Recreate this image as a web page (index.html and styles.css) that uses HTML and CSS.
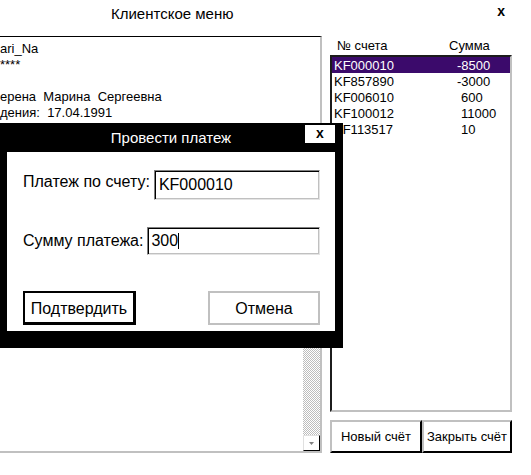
FILE: index.html
```html
<!DOCTYPE html>
<html lang="ru">
<head>
<meta charset="utf-8">
<title>Клиентское меню</title>
<link rel="stylesheet" href="styles.css">
</head>
<body>
<div class="app">
  <header class="topbar">
    <div class="title">Клиентское меню</div>
    <div class="win-close">x</div>
  </header>
  <div class="main">
    <section class="info-panel">
      <div class="info">ari_Na
****

ерена  Марина  Сергеевна
дения:  17.04.1991</div>
      <div class="vscroll">
        <div class="thumb"></div>
        <div class="track"></div>
        <div class="arrow"><svg width="5" height="3" viewBox="0 0 5 3"><polygon points="0,0 5,0 2.5,3" fill="#808080"/></svg></div>
      </div>
    </section>
    <section class="accounts">
      <div class="acc-head"><span class="c1">№ счета</span><span class="c2">Сумма</span></div>
      <div class="acc-list">
        <div class="row sel"><span class="acc">KF000010</span><span class="sum neg">-8500</span></div>
        <div class="row"><span class="acc">KF857890</span><span class="sum neg">-3000</span></div>
        <div class="row"><span class="acc">KF006010</span><span class="sum">600</span></div>
        <div class="row"><span class="acc">KF100012</span><span class="sum">11000</span></div>
        <div class="row"><span class="acc">KF113517</span><span class="sum">10</span></div>
      </div>
      <div class="acc-actions">
        <button class="btn btn-new">Новый счёт</button>
        <button class="btn btn-close">Закрыть счёт</button>
      </div>
    </section>
  </div>
  <div class="dialog">
    <div class="dlg-bar">
      <div class="dlg-title">Провести платеж</div>
      <div class="dlg-x">x</div>
    </div>
    <div class="dlg-body">
      <div class="field f1">
        <label>Платеж по счету:</label>
        <div class="input">KF000010</div>
      </div>
      <div class="field f2">
        <label>Сумму платежа:</label>
        <div class="input">300<span class="caret"></span></div>
      </div>
      <div class="dlg-actions">
        <button class="dbtn btn-ok">Подтвердить</button>
        <button class="dbtn btn-cancel">Отмена</button>
      </div>
    </div>
  </div>
</div>
</body>
</html>
```
FILE: styles.css
```css
* { box-sizing: border-box; }
body {
  margin: 0;
  background: #fff;
  font-family: "Liberation Sans", Arial, sans-serif;
  font-size: 13px;
  color: #000;
}
.app {
  position: relative;
  width: 531px;
  height: 475px;
  overflow: hidden;
}
.topbar {
  height: 36px;
  display: flex;
  align-items: flex-start;
}
.title {
  padding: 4.5px 0 0 111px;
  font-size: 15px;
  line-height: 18px;
}
.win-close {
  margin-left: auto;
  margin-right: 26px;
  padding-top: 2px;
  font-weight: bold;
  font-size: 14px;
  line-height: 18px;
}
.main {
  display: flex;
  gap: 8px;
  height: 417px;
}
.info-panel {
  width: 322px;
  display: flex;
  border-top: 1px solid #000;
  border-right: 2px solid #c0c0c0;
  border-bottom: 2px solid #c0c0c0;
}
.info {
  flex: 1;
  padding-top: 4px;
  line-height: 16px;
  white-space: pre;
  overflow: hidden;
}
.vscroll {
  width: 17px;
  display: flex;
  flex-direction: column;
}
.thumb {
  height: 311px;
  background: #fff;
}
.track {
  flex: 1;
  background: repeating-conic-gradient(#bdbdbd 0 25%, #fff 0 50%) 0 0 / 2px 2px;
}
.arrow {
  height: 16px;
  border: 1px solid;
  border-color: #e0e0e0 #000 #000 #e0e0e0;
  background: #fff;
  display: flex;
  align-items: center;
  justify-content: center;
}
.accounts {
  width: 182px;
  display: flex;
  flex-direction: column;
}
.acc-head {
  height: 19px;
  padding: 2px 0 0 7px;
  display: flex;
  line-height: 16px;
}
.acc-head .c1 { width: 112px; }
.acc-list {
  flex: 1;
  border: 2px solid;
  border-color: #1c1c1c #c0c0c0 #c0c0c0 #1c1c1c;
}
.row {
  display: flex;
  height: 16px;
  line-height: 18px;
  padding-left: 2px;
}
.row .acc { width: 127px; }
.row .neg { margin-left: -4px; }
.row.sel {
  background: #3b0a6b;
  color: #fff;
}
.acc-actions {
  display: flex;
  margin-top: 8px;
  height: 33px;
}
.btn {
  font: inherit;
  color: #000;
  background: #fff;
  border: 2px solid;
  border-color: #c0c0c0 #000 #000 #c0c0c0;
  padding: 0;
}
.btn-new { width: 92px; }
.btn-close { width: 90px; }

.dialog {
  position: absolute;
  left: 0;
  top: 123px;
  width: 343px;
  background: #000;
  padding: 0 8px 17px 7px;
}
.dlg-bar {
  display: grid;
  grid-template-columns: 30px 1fr 30px;
  height: 29px;
}
.dlg-title {
  grid-column: 2;
  text-align: center;
  color: #fff;
  font-size: 15px;
  line-height: 28px;
  padding-top: 1px;
}
.dlg-x {
  align-self: start;
  margin-top: 2px;
  height: 18px;
  background: #fff;
  font-weight: bold;
  font-size: 14px;
  line-height: 17px;
  text-align: center;
}
.dlg-body {
  background: #fff;
  height: 179px;
  padding: 18px 15px 0 16px;
  font-size: 16px;
}
.field { display: flex; }
.field label {
  white-space: nowrap;
  line-height: 20px;
  margin-right: 4px;
}
.f1 label { margin-top: 2px; }
.f2 { margin-top: 27px; }
.f2 label { margin-top: 4px; }
.input {
  flex: 1;
  height: 30px;
  border: 1px solid;
  border-color: #808080 #e4e4e4 #e4e4e4 #808080;
  box-shadow: inset 1px 1px 0 #000, inset -1px -1px 0 #c0c0c0;
  padding: 0 3px 0 4px;
  line-height: 28px;
}
.f2 .input {
  height: 28px;
  line-height: 26px;
  padding-left: 3px;
}
.caret {
  display: inline-block;
  width: 1px;
  height: 16px;
  background: #000;
  vertical-align: -3px;
}
.dlg-actions {
  display: flex;
  justify-content: space-between;
  margin-top: 36px;
  height: 34px;
}
.dbtn {
  font: inherit;
  color: #000;
  background: #fff;
  padding: 2px 0 0;
}
.btn-ok {
  width: 113px;
  border: 2px solid #000;
  border-right-width: 3px;
  border-bottom-width: 3px;
}
.btn-cancel {
  width: 112px;
  border: 2px solid #c0c0c0;
}
```
